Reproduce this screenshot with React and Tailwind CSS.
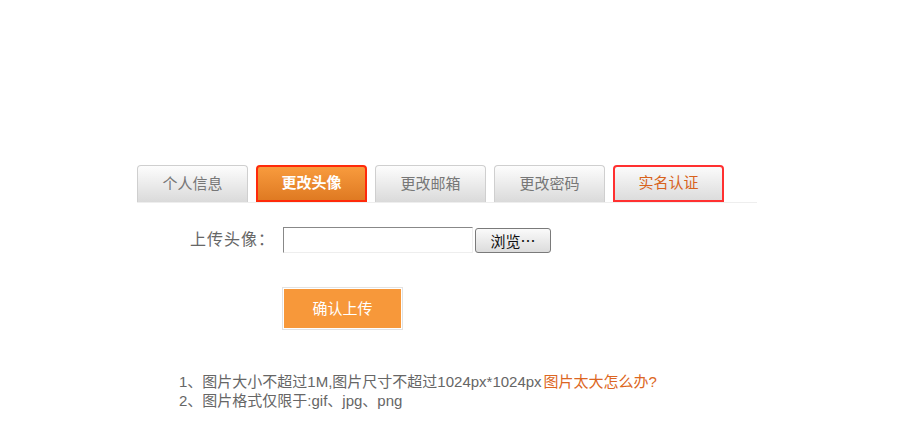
export default function App() {
    const tabs = [
        { label: "个人信息", kind: "normal" },
        { label: "更改头像", kind: "active" },
        { label: "更改邮箱", kind: "normal" },
        { label: "更改密码", kind: "normal" },
        { label: "实名认证", kind: "alert" },
    ];

    const tabClass = (kind) => {
        if (kind === "active") {
            return "bg-gradient-to-b from-[#f89b3d] to-[#df7a22] border-2 border-[#ff2a0a] text-white font-bold";
        }
        if (kind === "alert") {
            return "bg-gradient-to-b from-[#fbfbfb] to-[#dcdcdc] border-2 border-[#ff3030] text-[#d8621c]";
        }
        return "bg-gradient-to-b from-[#fdfdfd] to-[#dadada] border border-[#cfcfcf] border-b-0 text-[#777]";
    };

    return (
        <div className="w-[908px] h-[439px] bg-white pt-[165px] pl-[137px] font-['Liberation_Sans','Noto_Sans_CJK_SC',sans-serif]">
            {/* tabs */}
            <div className="flex items-end gap-[8px] w-[620px] border-b border-[#eeeeee]">
                {tabs.map((t) => (
                    <div
                        key={t.label}
                        className={
                            "w-[111px] h-[37px] rounded-t-[4px] flex items-center justify-center text-[15px] " +
                            tabClass(t.kind)
                        }
                    >
                        {t.label}
                    </div>
                ))}
            </div>

            {/* upload row */}
            <div className="flex items-center mt-[24px]">
                <span className="w-[140px] pl-[53px] text-[16px] text-[#666] tracking-[1px]">上传头像：</span>
                <div className="ml-[6px] w-[190px] h-[26px] bg-white border border-t-[#888] border-l-[#888] border-r-[#eee] border-b-[#eee]" />
                <button className="ml-[2px] w-[76px] h-[25px] rounded-[3px] border border-[#7a7a7a] bg-gradient-to-b from-[#fafafa] to-[#dcdcdc] text-[15px] text-[#111] leading-none font-['Noto_Sans_CJK_SC',sans-serif]">
                    浏览⋯
                </button>
            </div>

            {/* confirm */}
            <div className="ml-[145px] mt-[34px] w-[121px] h-[43px] border border-[#e2e2e2] p-px">
                <button className="w-full h-full bg-[#f7983a] text-white text-[15px] pt-[2px]">确认上传</button>
            </div>

            {/* notes */}
            <div className="ml-[42px] mt-[42px] text-[15px] leading-[19px] text-[#666]">
                <p>
                    1、图片大小不超过1M,图片尺寸不超过1024px*1024px
                    <a className="text-[#dc6622] ml-[2px]">图片太大怎么办?</a>
                </p>
                <p>2、图片格式仅限于:gif、jpg、png</p>
            </div>
        </div>
    );
}
